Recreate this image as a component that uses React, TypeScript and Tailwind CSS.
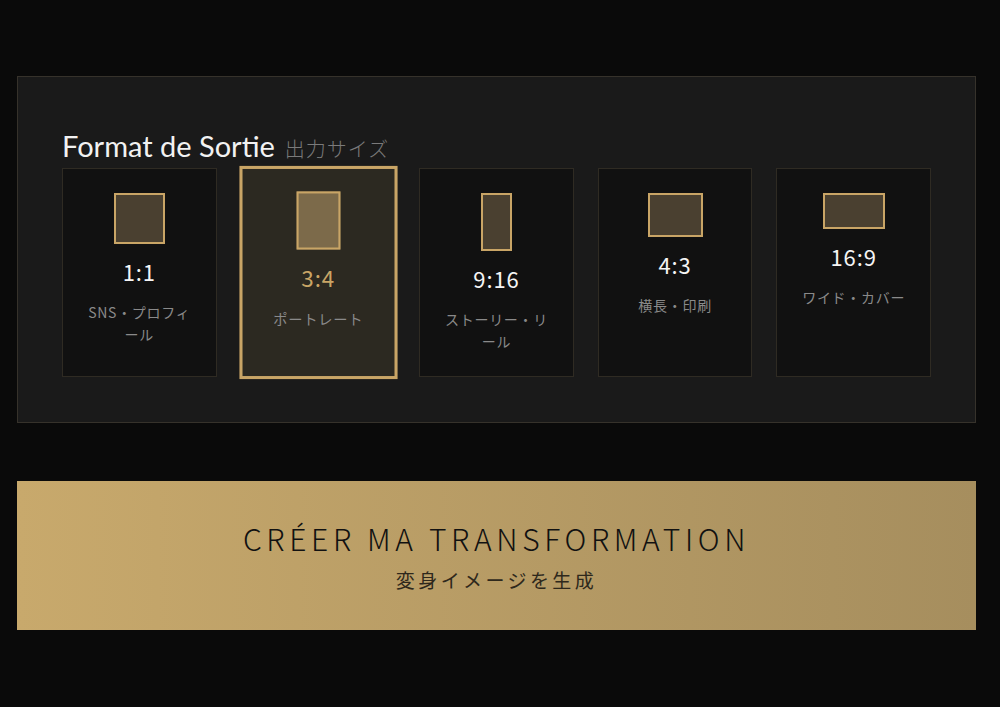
import React from "react";

const formats = [
  { ratio: "1:1", label: "SNS・プロフィール", w: 51, h: 51 },
  { ratio: "3:4", label: "ポートレート", w: 43, h: 57 },
  { ratio: "9:16", label: "ストーリー・リール", w: 31, h: 58 },
  { ratio: "4:3", label: "横長・印刷", w: 55, h: 44 },
  { ratio: "16:9", label: "ワイド・カバー", w: 62, h: 36 },
];

const selected = 1;

export default function App() {
  return (
    <div
      className="min-h-[707px] w-[1000px] bg-[#0a0a0a] pl-[17px] pt-[76px]"
      style={{ fontFamily: '"Noto Sans CJK JP", "Noto Sans", sans-serif' }}
    >
      <div className="w-[959px] border border-[#36322b] bg-[#1a1a1a] px-[44px] pt-[48px] pb-[45px]">
        <div className="mb-[1px] flex items-baseline">
          <span
            className="text-[29px] leading-[42px] text-[#f2f2f2]"
            style={{ fontFamily: 'Lato, "Noto Sans", sans-serif' }}
          >
            Format de Sortie
          </span>
          <span className="ml-[10px] text-[20px] font-light tracking-[0.05em] text-[#7a7a7a]">
            出力サイズ
          </span>
        </div>
        <div className="flex gap-[24px]">
          {formats.map((f, i) => {
            const sel = i === selected;
            return (
              <div
                key={f.ratio}
                className={
                  sel
                    ? "flex w-[155px] scale-[1.02] flex-col items-center border-[3px] border-[#c9a566] bg-[#2c2921] px-[18px] pt-[22px] pb-[22px]"
                    : "flex w-[155px] flex-col items-center border border-[#2f2b23] bg-[#111111] px-5 pt-6 pb-[24px]"
                }
              >
                <div
                  className={
                    sel
                      ? "border-2 border-[#c9a566] bg-[#7c6a4a]"
                      : "border-2 border-[#c9a566] bg-[#4a4030]"
                  }
                  style={{ width: f.w, height: f.h }}
                />
                <div
                  className={
                    sel
                      ? "mt-[11px] text-[22px] leading-[33px] tracking-[0.04em] text-[#c9a566]"
                      : "mt-[11px] text-[22px] leading-[33px] tracking-[0.04em] text-[#f5f5f5]"
                  }
                >
                  {f.ratio}
                </div>
                <div className="mt-[13px] text-center text-[14px] leading-[22px] tracking-[0.05em] text-[#8a8a8a]">
                  {f.label}
                </div>
              </div>
            );
          })}
        </div>
      </div>
      <div className="mt-[58px] flex h-[149px] w-[959px] flex-col items-center justify-center bg-gradient-to-r from-[#c8a96c] to-[#a68e5e]">
        <div className="text-[30px] font-light leading-[40px] tracking-[0.155em] text-[#111111]">
          CRÉER MA TRANSFORMATION
        </div>
        <div className="mt-[8px] text-[19px] leading-[28px] tracking-[0.18em] text-[#2e281c]">
          変身イメージを生成
        </div>
      </div>
    </div>
  );
}
